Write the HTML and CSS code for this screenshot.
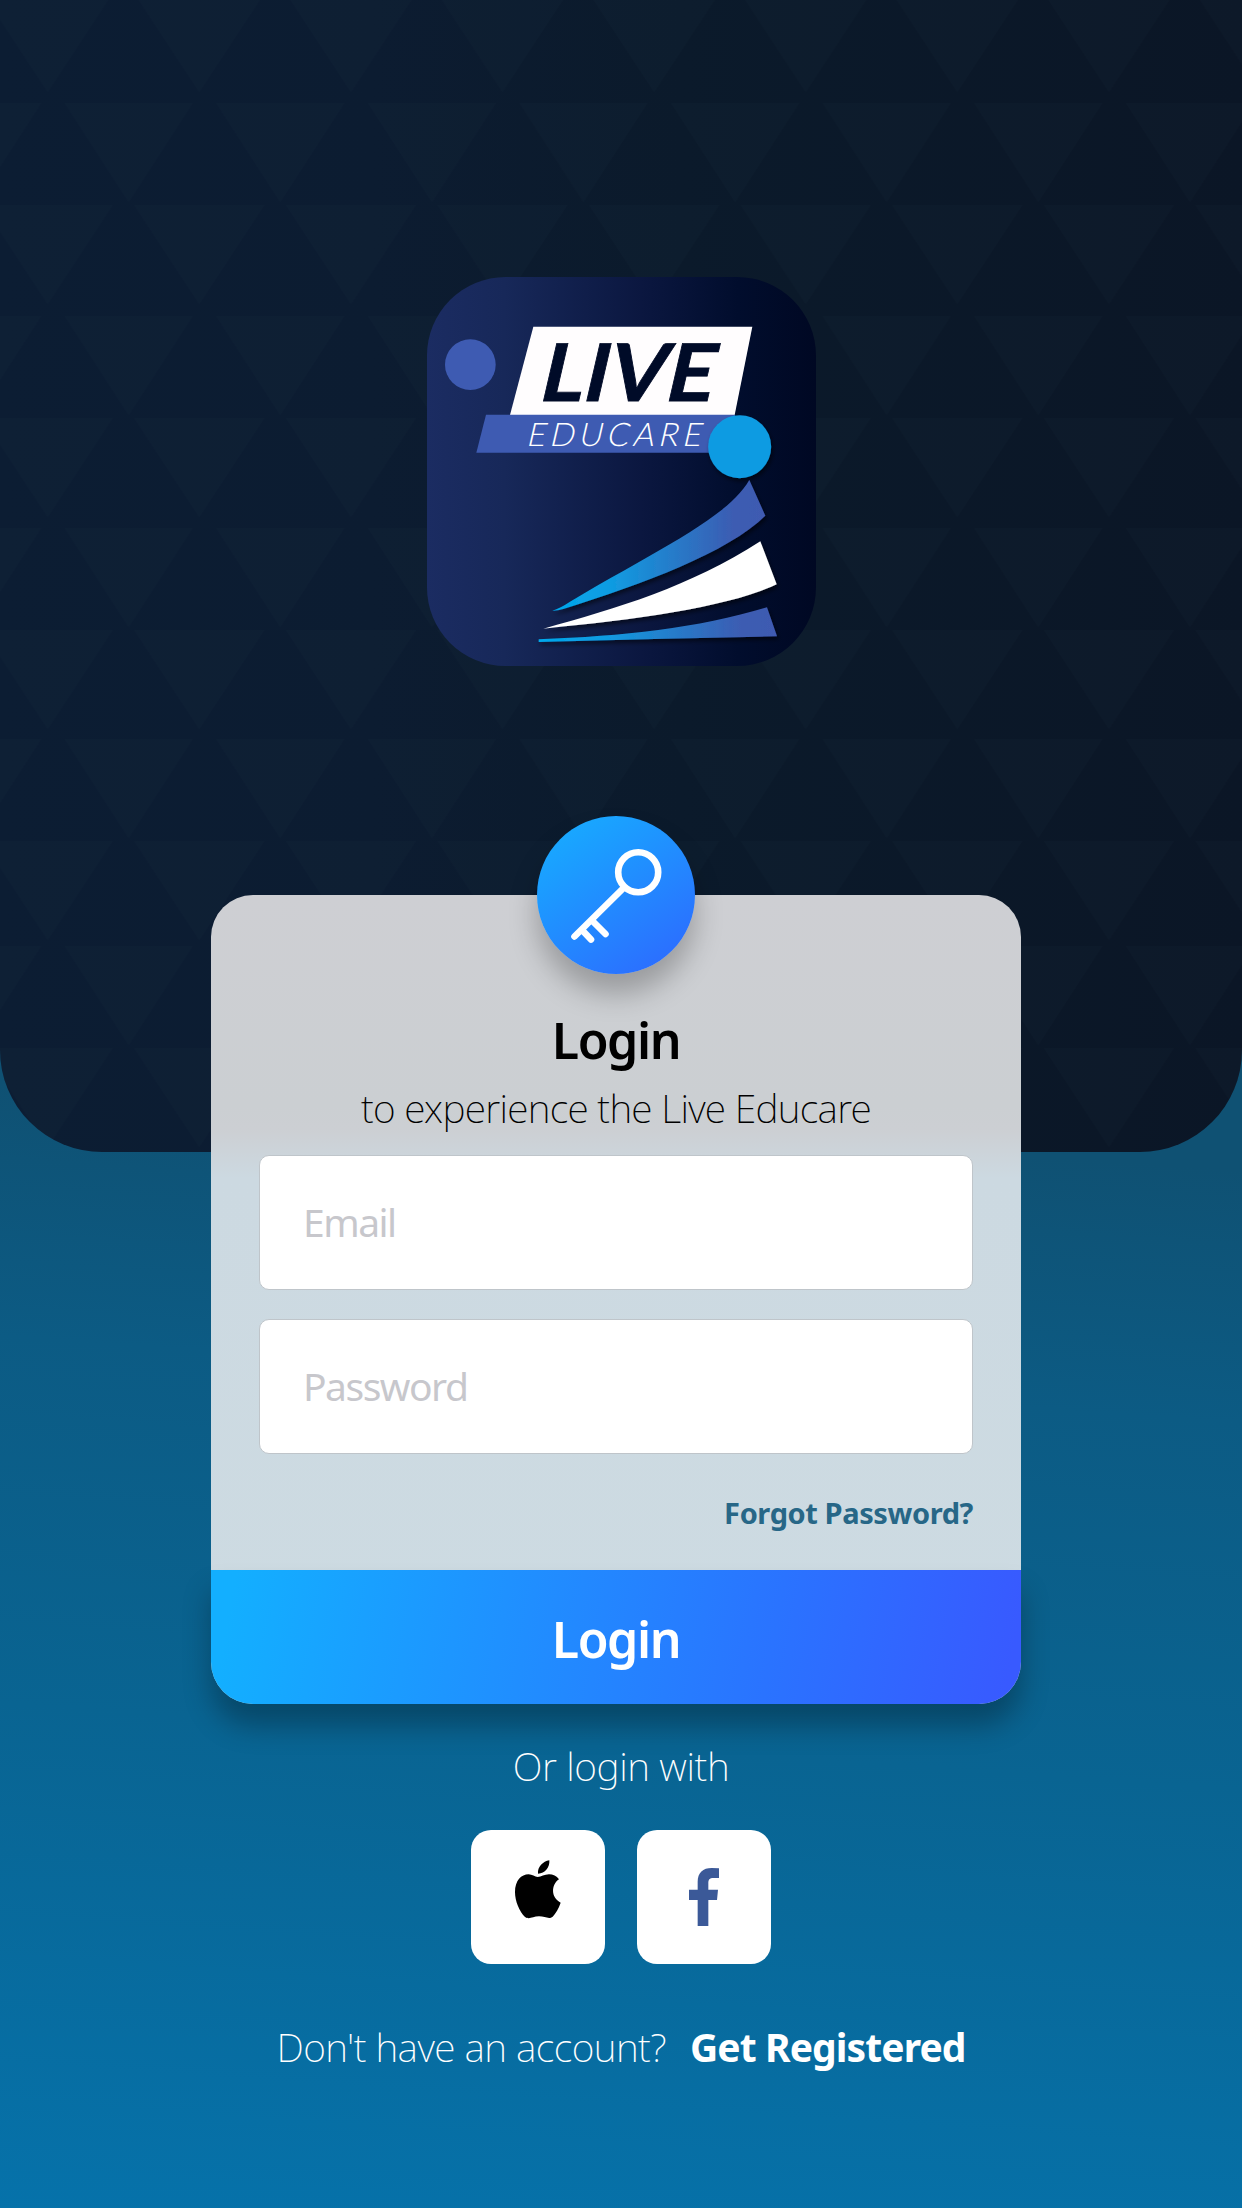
FILE: index.html
```html
<!DOCTYPE html>
<html lang="en">
<head>
<meta charset="utf-8">
<title>Live Educare – Login</title>
<link rel="stylesheet" href="styles.css">
</head>
<body>
<main class="screen">
  <div class="hero" aria-hidden="true">
    <svg class="pattern" width="1242" height="1152">
      <defs>
        <pattern id="even" width="151.6" height="1152" patternUnits="userSpaceOnUse" x="-28.3">
          <path d="M11-7h130l-65 99zM11 205h130l-65 99zM11 418h130l-65 99zM11 630h130l-65 99zM11 841h130l-65 99zM11 1048h130l-65 99z"/>
        </pattern>
        <pattern id="odd" width="151.6" height="1152" patternUnits="userSpaceOnUse" x="52.7">
          <path d="M12 103h128l-64 99zM12 316h128l-64 99zM12 528h128l-64 99zM12 739h128l-64 99zM12 946h128l-64 99z"/>
        </pattern>
      </defs>
      <rect width="1242" height="1152" fill="url(#even)"/>
      <rect width="1242" height="1152" fill="url(#odd)"/>
    </svg>
  </div>

  <svg class="logo" viewBox="51 51 1167 1167" role="img" aria-label="Live Educare">
    <defs>
      <linearGradient id="tile"><stop offset="0" stop-color="#1b2c62"/><stop offset=".2" stop-color="#172859"/><stop offset=".55" stop-color="#0b1740"/><stop offset=".8" stop-color="#010d2d"/><stop offset="1" stop-color="#000823"/></linearGradient>
      <linearGradient id="page"><stop offset="0" stop-color="#00a8ec"/><stop offset=".28" stop-color="#109be1"/><stop offset=".85" stop-color="#3c5cb2"/><stop offset="1" stop-color="#3f5ab1"/></linearGradient>
      <filter id="soft" x="-10%" y="-20%" width="120%" height="150%"><feDropShadow dx="5" dy="9" stdDeviation="6" flood-color="#000" flood-opacity=".55"/></filter>
    </defs>
    <rect x="51" y="51" width="1167" height="1167" rx="236" fill="url(#tile)"/>
    <circle cx="181" cy="314" r="76" fill="#3e5bb2"/>
    <path d="M370 200H1027L974 465H300z" fill="#fffdfe"/>
    <path d="M228 464H975V578H199z" fill="#3e5bb2"/>
    <text class="logo-live" transform="translate(380 423) skewX(-13)" textLength="521" lengthAdjust="spacingAndGlyphs">LIVE</text>
    <text class="logo-educare" transform="translate(347 559) skewX(-13)" textLength="524" lengthAdjust="spacing">EDUCARE</text>
    <g filter="url(#soft)">
      <circle cx="989" cy="560" r="94.500" fill="#109be2"/>
      <path d="M1018 660L1066 767C950 880 700 970 460 1047Q440 1053 427 1052Q450 1045 480 1025C750 865 950 775 1018 660z" fill="url(#page)"/>
      <path d="M1051 844L1100 973C960 1040 690 1078 400 1106C620 1046 840 980 1051 844z" fill="#fff"/>
      <path d="M1071 1042L1101 1129Q740 1136 386 1146V1138C640 1128 860 1106 1071 1042z" fill="url(#page)"/>
    </g>
  </svg>

  <form class="card">
    <div class="badge">
      <svg class="key" viewBox="537 816 158 158" aria-hidden="true">
        <circle cx="638.200" cy="872.300" r="20"/>
        <path d="M623.500 888L574.500 936.500M592 920.500L605.500 934M582.500 930.500L591 939.500"/>
      </svg>
    </div>
    <div class="card-body">
      <h1 class="title"><span>Login</span></h1>
      <p class="subtitle"><span>to experience the Live Educare</span></p>
      <div class="field"><span>Email</span></div>
      <div class="field"><span>Password</span></div>
      <a class="forgot"><span>Forgot Password?</span></a>
    </div>
    <div class="submit" role="button"><span>Login</span></div>
  </form>

  <p class="or"><span>Or login with</span></p>
  <div class="socials">
    <a class="social" aria-label="Apple">
      <svg viewBox="93 90 402 402"><path d="M328 181C330 202 315 221 294 221C292 201 309 184 328 181zM293 231C304 231 313 223 327 223C339 223 350 228 357 238C333 254 332 293 362 308C356 325 347 341 338 350C327 359 315 349 297 349C278 349 268 360 255 351C238 334 225 304 225 276C225 242 244 223 266 223C276 223 285 231 293 231z"/></svg>
    </a>
    <a class="social" aria-label="Facebook">
      <svg viewBox="591 90 402 402"><path fill="#3b5998" d="M773 378V300H747V269H773V246C773 218 789 204 815 204Q827 204 837 205V234H821C808 234 805 239 805 250V269H834L831 300H805V378z"/></svg>
    </a>
  </div>
  <p class="register"><span class="ask">Don't have an account?</span><a class="join"><span>Get Registered</span></a></p>
</main>
</body>
</html>
```
FILE: styles.css
```css
* { box-sizing: border-box; }

body {
  margin: 0;
  font-family: "Noto Sans", "Open Sans", sans-serif;
}

h1, p { margin: 0; }

.screen {
  position: relative;
  display: flex;
  flex-direction: column;
  align-items: center;
  width: 1242px;
  height: 2208px;
  padding-top: 277px;
  overflow: hidden;
  background: linear-gradient(184deg, #0f5173 51%, #0c5b84 62%, #096492 78%, #0672aa 100%);
}

.hero {
  position: absolute;
  inset: 0 0 auto;
  height: 1152px;
  overflow: hidden;
  border-radius: 0 0 102px 102px;
  background: linear-gradient(90deg, #0c1d33 0%, #0c1c31 30%, #0b1a2b 55%, #0b1626 100%);
}

.pattern { display: block; }
.pattern path { fill: #263c4c; fill-opacity: .075; }

.logo { position: relative; flex: none; width: 389px; height: 389px; margin-left: 1px; }

.logo-live { font: 700 239px Lato, sans-serif; fill: #000b28; stroke: #000b28; stroke-width: 2.5px; }
.logo-educare { font: 300 97px Lato, sans-serif; fill: #fff; }

.card {
  position: relative;
  flex: none;
  width: 810px;
  height: 809px;
  margin: 229px 10px 0 0;
  display: flex;
  flex-direction: column;
  border-radius: 42px;
  background: linear-gradient(#cecfd3 0, #cbcfd2 26%, #cccfd3 29%, #ccd9e1 35%, #cddbe2 100%);
}

.badge {
  position: absolute;
  top: -79px;
  left: 326px;
  width: 158px;
  height: 158px;
  border-radius: 50%;
  background: linear-gradient(145deg, #17adff 5%, #1c9bff 30%, #2b70ff 86%, #3062ff);
  box-shadow: 0 20px 28px rgba(0, 0, 0, .25);
}

.key { display: block; fill: none; stroke: #fff; stroke-width: 6.6; stroke-linecap: round; }

.card-body {
  height: 675px;
  padding: 108px 48px 0;
  display: flex;
  flex-direction: column;
}

.title { height: 75px; line-height: 75px; font-size: 50px; font-weight: 600; text-align: center; letter-spacing: -1.4px; }
.subtitle { height: 60px; line-height: 60px; margin-bottom: 17px; font-size: 39px; font-weight: 200; text-align: center; letter-spacing: -.73px; white-space: nowrap; }

.field {
  display: flex;
  align-items: center;
  height: 135px;
  margin-bottom: 29px;
  padding: 0 0 3px 43px;
  border: 1px solid #bfc5ca;
  border-radius: 10px;
  background: #fff;
  color: #c7c7cc;
  font-size: 39px;
  letter-spacing: -1.5px;
}

.forgot { align-self: flex-end; margin-top: 10px; line-height: 40px; color: #276787; font-size: 29px; font-weight: 700; letter-spacing: -.4px; }

.submit {
  height: 134px;
  border-radius: 0 0 42px 42px;
  background: linear-gradient(100deg, #13afff 3%, #1f91ff 36%, #2a73ff 69%, #385aff 98%);
  box-shadow: 0 22px 28px rgba(0, 0, 0, .28);
  color: #fff;
  font-size: 50px;
  font-weight: 600;
  line-height: 139px;
  text-align: center;
  letter-spacing: -1.4px;
}

.or { position: relative; margin-top: 32px; height: 60px; line-height: 60px; color: #fff; font-size: 39px; font-weight: 200; letter-spacing: -.4px; }

.socials { display: flex; gap: 32px; margin-top: 34px; }

.social { width: 134px; height: 134px; border-radius: 20px; background: #fff; }
.social svg { display: block; }

.register { display: flex; gap: 24px; margin-top: 53px; height: 60px; line-height: 60px; color: #fff; font-size: 39px; font-weight: 200; white-space: nowrap; letter-spacing: -.55px; }
.join { font-weight: 700; letter-spacing: -.9px; }
```
